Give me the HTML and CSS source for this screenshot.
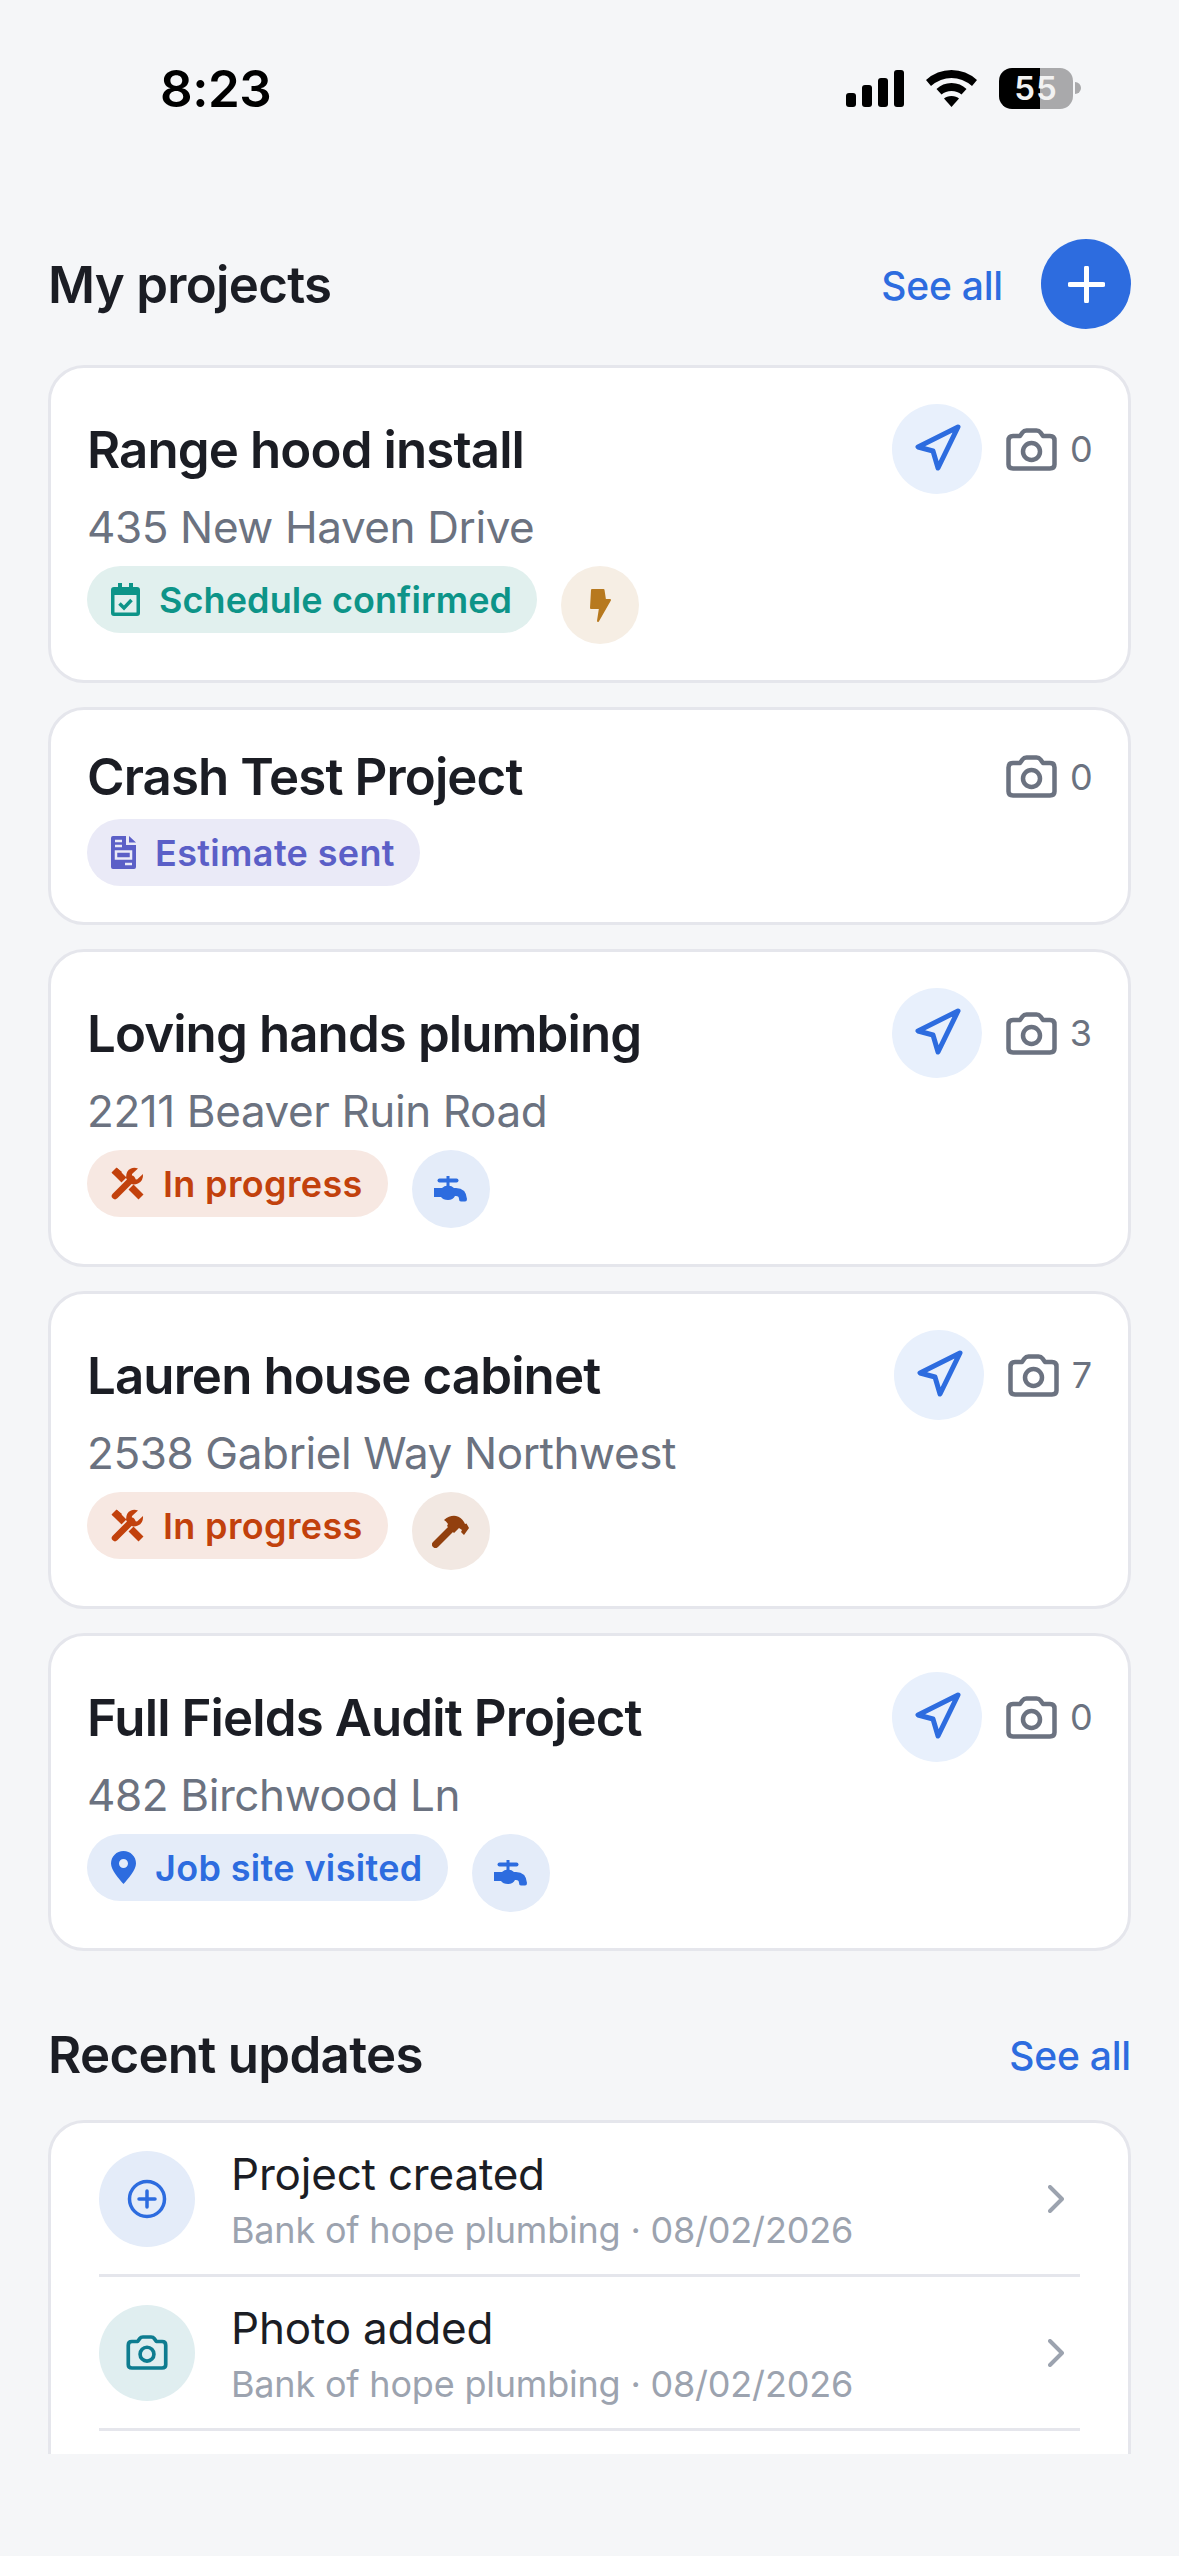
FILE: index.html
```html
<!DOCTYPE html>
<html lang="en">
<head>
  <meta charset="UTF-8">
  <meta name="viewport" content="width=device-width, initial-scale=1.0">
  <title>My projects</title>
  <link rel="stylesheet" href="styles.css">
</head>
<body>
  <svg class="sprites" width="0" height="0">
    <symbol id="navigate" viewBox="0 0 90 90">
      <path d="M66 23 26 43l15 4 5 17z" fill="none" stroke="currentColor" stroke-width="5" stroke-linejoin="round"/>
    </symbol>
    <symbol id="camera" viewBox="0 0 51 43">
      <path d="M7 8h7l2.500-3.500q1.500-2 4-2h10q2.500 0 4 2L37 8h7q4.500 0 4.500 4.500v24q0 4-4.500 4H7q-4.500 0-4.500-4v-24Q2.500 8 7 8z" fill="none" stroke="currentColor" stroke-width="4.500" stroke-linejoin="round"/>
      <circle cx="25.500" cy="23.500" r="8.500" fill="none" stroke="currentColor" stroke-width="4.500"/>
    </symbol>
    <symbol id="tap" viewBox="0 0 33 26">
      <rect x="3.500" y="2.500" width="21" height="4" rx="2" fill="currentColor"/>
      <rect x="12.500" y="0" width="3" height="11" fill="currentColor"/>
      <path d="M0 12H8Q10 9.500 14 9.500 18 9.500 20 12H22Q32 12 33 23 33 25.500 31 25.500H27Q25 25.500 25 23 25 20 22 20H21Q19 24 14 24 9 24 7 21H0Z" fill="currentColor"/>
    </symbol>
    <symbol id="tools" viewBox="0 0 33 33">
      <path d="M3 3 30 30" stroke="currentColor" stroke-width="7" fill="none"/>
      <path d="M1 6 6 1l5 4-5 5z" fill="currentColor"/>
      <path d="M6 27 22 11" stroke="var(--pill-bg)" stroke-width="10" fill="none"/>
      <path d="M4 29 21 12" stroke="currentColor" stroke-width="6.500" stroke-linecap="round" fill="none"/>
      <path d="M27 1.500 21 7q-1 5 5 5.500l6-5.500q.5 7-5 9.500-5 2-9-.5L15 11q0-8 5-9.500 3-1.500 7 0z" fill="currentColor"/>
    </symbol>
  </svg>

  <div class="status-bar">
    <span class="clock">8:23</span>
    <div class="status-icons">
      <svg class="signal" width="58" height="37" viewBox="0 0 58 37">
        <rect x="0" y="23" width="10" height="14" rx="3"/>
        <rect x="16" y="15" width="10" height="22" rx="3"/>
        <rect x="32" y="8" width="10" height="29" rx="3"/>
        <rect x="48" y="0" width="10" height="37" rx="3"/>
      </svg>
      <svg class="wifi" width="51" height="37" viewBox="0 0 51 37">
        <path d="M25.500 0Q40 0 51 10l-5 6Q36.500 8 25.500 8T5 16l-5-6Q11 0 25.500 0z"/>
        <path d="M25.500 13q9 0 15 6l-5 5.500q-4-3.500-10-3.500t-10 3.500L10.500 19q6-6 15-6z"/>
        <path d="M25.500 26q5 0 7.500 2.500L25.500 37 18 28.500q2.500-2.500 7.500-2.500z"/>
      </svg>
      <div class="battery">
        <div class="battery-body">
          <span class="battery-text">55</span>
        </div>
        <span class="battery-nub"></span>
      </div>
    </div>
  </div>

  <main class="content">
    <section>
      <div class="section-head projects-head">
        <h2>My projects</h2>
        <div class="head-actions">
          <a class="see-all" href="#projects">See all</a>
          <button class="add-btn" type="button" aria-label="Add project">
            <svg width="37" height="37" viewBox="0 0 37 37"><path d="M18.500 2v33M2 18.500h33" stroke="#fff" stroke-width="5" stroke-linecap="round"/></svg>
          </button>
        </div>
      </div>

      <div class="project-list">
        <article class="card">
          <div class="card-top">
            <h3>Range hood install</h3>
            <span class="nav-btn"><svg width="90" height="90"><use href="#navigate"/></svg></span>
            <span class="photos photos-zero"><svg width="51" height="43"><use href="#camera"/></svg>0</span>
          </div>
          <p class="address">435 New Haven Drive</p>
          <div class="tags">
            <span class="pill pill-teal">
              <svg width="29" height="33" viewBox="0 0 29 33">
                <path d="M7 0h4v4h7V0h4v4h4q3 0 3 3v23q0 3-3 3H3q-3 0-3-3V7q0-3 3-3h4zM3.500 12v17.500h22V12z" fill="currentColor"/>
                <path d="M8.500 20.500l4.500 4.500 7.500-8" fill="none" stroke="currentColor" stroke-width="3.500"/>
              </svg>
              Schedule confirmed
            </span>
            <span class="trade trade-amber">
              <svg width="21" height="33" viewBox="0 0 21 33"><path d="M2 1h11.500L15 11h5L8 32l2-13H1z" fill="currentColor" stroke="currentColor" stroke-width="2" stroke-linejoin="round"/></svg>
            </span>
          </div>
        </article>

        <article class="card">
          <div class="card-top card-top-plain">
            <h3>Crash Test Project</h3>
            <span class="photos photos-zero"><svg width="51" height="43"><use href="#camera"/></svg>0</span>
          </div>
          <div class="tags">
            <span class="pill pill-purple">
              <svg width="25" height="33" viewBox="0 0 25 33">
                <path d="M2 0h13v9h10v22q0 2-2 2H2q-2 0-2-2V2q0-2 2-2zM18 0l7 6.500h-7z" fill="currentColor"/>
                <path d="M4 5h7M4 10h7M5 15.500h15v7H5zM14 28h7" fill="none" stroke="#eaeaf7" stroke-width="2.500"/>
              </svg>
              Estimate sent
            </span>
          </div>
        </article>

        <article class="card">
          <div class="card-top">
            <h3>Loving hands plumbing</h3>
            <span class="nav-btn"><svg width="90" height="90"><use href="#navigate"/></svg></span>
            <span class="photos"><svg width="51" height="43"><use href="#camera"/></svg>3</span>
          </div>
          <p class="address">2211 Beaver Ruin Road</p>
          <div class="tags">
            <span class="pill pill-red"><svg width="33" height="33"><use href="#tools"/></svg>In progress</span>
            <span class="trade trade-blue"><svg width="33" height="26"><use href="#tap"/></svg></span>
          </div>
        </article>

        <article class="card">
          <div class="card-top">
            <h3>Lauren house cabinet</h3>
            <span class="nav-btn"><svg width="90" height="90"><use href="#navigate"/></svg></span>
            <span class="photos"><svg width="51" height="43"><use href="#camera"/></svg>7</span>
          </div>
          <p class="address">2538 Gabriel Way Northwest</p>
          <div class="tags">
            <span class="pill pill-red"><svg width="33" height="33"><use href="#tools"/></svg>In progress</span>
            <span class="trade trade-brown">
              <svg width="37" height="33" viewBox="0 0 37 33">
                <path d="M3.500 29.500 20 13" stroke="currentColor" stroke-width="7" stroke-linecap="round" fill="none"/>
                <path d="M12 5Q18 0 24 1 29 2 32 7L33 9 34.500 8.500 37 13 32 20 29 17 30 15 27 13 22 18 15 11 16 9Q14 6 12 5Z" fill="currentColor"/>
              </svg>
            </span>
          </div>
        </article>

        <article class="card">
          <div class="card-top">
            <h3>Full Fields Audit Project</h3>
            <span class="nav-btn"><svg width="90" height="90"><use href="#navigate"/></svg></span>
            <span class="photos photos-zero"><svg width="51" height="43"><use href="#camera"/></svg>0</span>
          </div>
          <p class="address">482 Birchwood Ln</p>
          <div class="tags">
            <span class="pill pill-blue">
              <svg width="25" height="33" viewBox="0 0 25 33"><path fill-rule="evenodd" d="M12.500 0C19.500 0 25 5.500 25 12.500 25 19 17 28 12.500 33 8 28 0 19 0 12.500 0 5.500 5.500 0 12.500 0zm0 8a4.500 4.500 0 1 0 0 9 4.500 4.500 0 0 0 0-9z" fill="currentColor"/></svg>
              Job site visited
            </span>
            <span class="trade trade-blue"><svg width="33" height="26"><use href="#tap"/></svg></span>
          </div>
        </article>
      </div>
    </section>

    <section>
      <div class="section-head updates-head">
        <h2>Recent updates</h2>
        <a class="see-all" href="#updates">See all</a>
      </div>

      <div class="updates">
        <div class="update-row">
          <span class="update-icon icon-blue">
            <svg width="40" height="40" viewBox="0 0 40 40"><circle cx="20" cy="20" r="17.500" fill="none" stroke="currentColor" stroke-width="3.500"/><path d="M20 12v16M12 20h16" stroke="currentColor" stroke-width="3.500" stroke-linecap="round"/></svg>
          </span>
          <div class="update-text">
            <div class="update-title">Project created</div>
            <div class="update-sub">Bank of hope plumbing · 08/02/2026</div>
          </div>
          <svg class="chevron" width="16" height="28" viewBox="0 0 16 28"><path d="M2 2l12 12L2 26" fill="none" stroke="currentColor" stroke-width="4" stroke-linecap="round" stroke-linejoin="round"/></svg>
        </div>
        <div class="update-row">
          <span class="update-icon icon-teal">
            <svg width="42" height="35"><use href="#camera"/></svg>
          </span>
          <div class="update-text">
            <div class="update-title">Photo added</div>
            <div class="update-sub">Bank of hope plumbing · 08/02/2026</div>
          </div>
          <svg class="chevron" width="16" height="28" viewBox="0 0 16 28"><path d="M2 2l12 12L2 26" fill="none" stroke="currentColor" stroke-width="4" stroke-linecap="round" stroke-linejoin="round"/></svg>
        </div>
      </div>
    </section>
  </main>
</body>
</html>
```

FILE: styles.css
```css
* {
  box-sizing: border-box;
}
body {
  margin: 0;
  height: 2556px;
  overflow: hidden;
  background-color: #f5f6f8;
  font-family: Inter, "Noto Sans", sans-serif;
  color: #1b1d24;
}
h2, h3, p {
  margin: 0;
}
.sprites {
  position: absolute;
}

/* status bar */
.status-bar {
  height: 176px;
  padding: 0 98px 0 160px;
  display: flex;
  align-items: center;
  justify-content: space-between;
}
.clock {
  font-size: 51px;
  font-weight: 600;
  letter-spacing: -0.5px;
  color: #000;
}
.status-icons {
  display: flex;
  align-items: center;
}
.signal {
  fill: #000;
  margin-right: 22px;
}
.wifi {
  fill: #000;
  margin-right: 22px;
}
.battery {
  display: flex;
  align-items: center;
}
.battery-body {
  width: 74px;
  height: 41px;
  border-radius: 13px;
  background: linear-gradient(to right, #000 41px, #a9a9ab 41px);
  display: flex;
  align-items: center;
  justify-content: center;
}
.battery-text {
  color: #f2f2f2;
  font-size: 33px;
  font-weight: 600;
  letter-spacing: 1px;
}
.battery-nub {
  width: 6px;
  height: 12px;
  margin-left: 2px;
  border-radius: 0 6px 6px 0;
  background-color: #a9a9ab;
}

/* page content, cut off above the tab bar */
.content {
  height: 2278px;
  padding: 0 48px;
  overflow: hidden;
}
.section-head {
  display: flex;
  align-items: center;
  justify-content: space-between;
}
.section-head h2 {
  font-size: 51px;
  font-weight: 560;
  letter-spacing: -0.7px;
}
.projects-head {
  margin-top: 63px;
  margin-bottom: 36px;
  height: 90px;
}
.updates-head {
  margin-top: 73px;
  margin-bottom: 36px;
  height: 60px;
}
.head-actions {
  display: flex;
  align-items: center;
  gap: 38px;
}
.see-all {
  padding-top: 2px;
  color: #2d6cdf;
  font-size: 39px;
  font-weight: 500;
  letter-spacing: -0.2px;
  text-decoration: none;
}
.add-btn {
  width: 90px;
  height: 90px;
  padding: 0;
  border: none;
  border-radius: 50%;
  background-color: #2d6cdf;
  display: flex;
  align-items: center;
  justify-content: center;
}

/* project cards */
.project-list {
  display: flex;
  flex-direction: column;
  gap: 24px;
}
.card {
  padding: 36px;
  background-color: #fff;
  border: 3px solid #e5e6ec;
  border-radius: 36px;
}
.card-top {
  height: 90px;
  display: flex;
  align-items: center;
}
.card-top-plain {
  height: 61px;
}
.card-top h3 {
  flex: 1;
  font-size: 51px;
  font-weight: 600;
  letter-spacing: -0.9px;
}
.nav-btn {
  width: 90px;
  height: 90px;
  border-radius: 50%;
  background-color: #e8f0fc;
  color: #2d6cdf;
  flex-shrink: 0;
}
.nav-btn svg {
  display: block;
}
.photos {
  margin-left: 24px;
  display: flex;
  align-items: center;
  gap: 13px;
  color: #6b7280;
  font-size: 36px;
}
.photos-zero {
  letter-spacing: -0.8px;
}
.address {
  margin-top: 6px;
  font-size: 44px;
  line-height: 54px;
  letter-spacing: -0.4px;
  color: #6b7280;
}
.tags {
  margin-top: 12px;
  display: flex;
  align-items: flex-start;
  gap: 24px;
}
.pill {
  --pill-bg: #fff;
  height: 67px;
  padding: 0 25px 0 24px;
  border-radius: 34px;
  display: flex;
  align-items: center;
  gap: 19px;
  background-color: var(--pill-bg);
  font-size: 36px;
  font-weight: 560;
  letter-spacing: 0.35px;
}
.pill-teal {
  --pill-bg: #e1f0ee;
  color: #0d9488;
  letter-spacing: 0.1px;
}
.pill-purple {
  --pill-bg: #eaeaf7;
  color: #5b5fc7;
}
.pill-red {
  --pill-bg: #f7e8e2;
  color: #c2410c;
}
.pill-blue {
  --pill-bg: #e4ecf9;
  color: #2d6cdf;
}
.trade {
  width: 78px;
  height: 78px;
  border-radius: 50%;
  display: flex;
  align-items: center;
  justify-content: center;
}
.trade-amber {
  background-color: #f6eee4;
  color: #b7791f;
}
.trade-blue {
  background-color: #e4ecf9;
  color: #2d6cdf;
}
.trade-brown {
  background-color: #f2e8e2;
  color: #92400e;
}

/* recent updates */
.updates {
  padding: 0 48px 60px;
  background-color: #fff;
  border: 3px solid #e5e6ec;
  border-radius: 36px;
}
.update-row {
  height: 154px;
  padding-right: 16px;
  display: flex;
  align-items: center;
  gap: 36px;
  border-bottom: 3px solid #e5e6ec;
}
.update-icon {
  width: 96px;
  height: 96px;
  border-radius: 50%;
  display: flex;
  align-items: center;
  justify-content: center;
  flex-shrink: 0;
}
.icon-blue {
  background-color: #e4ecf9;
  color: #2d6cdf;
}
.icon-teal {
  background-color: #e0eef0;
  color: #0e7c90;
}
.update-text {
  flex: 1;
  padding-top: 3px;
}
.update-title {
  font-size: 44px;
  line-height: 54px;
  letter-spacing: -0.2px;
}
.update-sub {
  margin-top: 5px;
  font-size: 36px;
  line-height: 48px;
  letter-spacing: -0.2px;
  color: #9ca3af;
}
.chevron {
  color: #9ca3af;
}
```
